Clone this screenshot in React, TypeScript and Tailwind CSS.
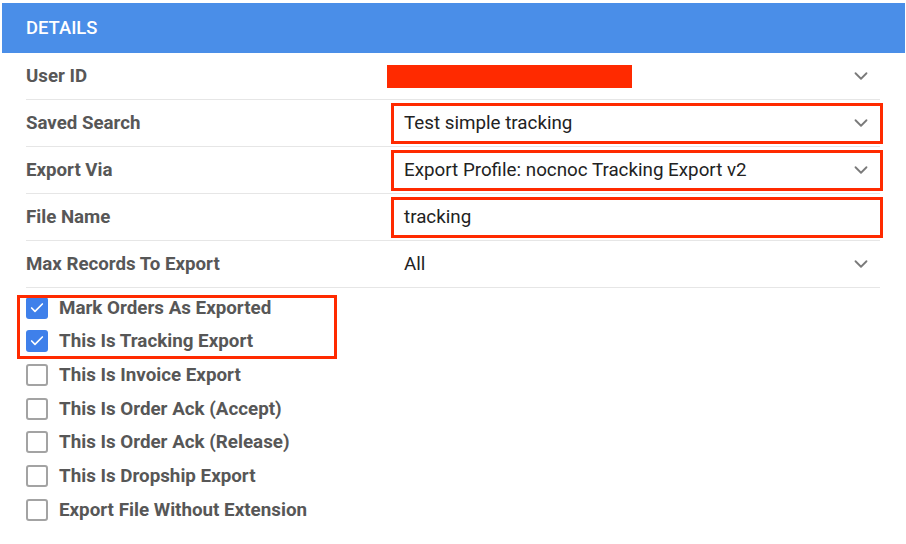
import { ChevronDown, Check } from 'lucide-react';

type Field = {
  label: string;
  value?: string;
  redacted?: boolean;
  boxed?: boolean;
  chevron?: boolean;
};

const fields: Field[] = [
  { label: 'User ID', redacted: true, chevron: true },
  { label: 'Saved Search', value: 'Test simple tracking', boxed: true, chevron: true },
  { label: 'Export Via', value: 'Export Profile: nocnoc Tracking Export v2', boxed: true, chevron: true },
  { label: 'File Name', value: 'tracking', boxed: true },
  { label: 'Max Records To Export', value: 'All', chevron: true },
];

const options = [
  { label: 'Mark Orders As Exported', checked: true },
  { label: 'This Is Tracking Export', checked: true },
  { label: 'This Is Invoice Export', checked: false },
  { label: 'This Is Order Ack (Accept)', checked: false },
  { label: 'This Is Order Ack (Release)', checked: false },
  { label: 'This Is Dropship Export', checked: false },
  { label: 'Export File Without Extension', checked: false },
];

export default function App() {
  return (
    <div
      className="w-[906px] h-[544px] bg-white pt-[3px] pl-[2px] overflow-hidden"
      style={{ fontFamily: 'Roboto, "Liberation Sans", sans-serif' }}
    >
      {/* header */}
      <div className="w-[903px] h-[50px] bg-[#4a8ee8] flex items-center pl-[24px]">
        <span className="text-white text-[18.4px] font-medium">DETAILS</span>
      </div>

      <div className="ml-[24px] w-[854px]">
        {fields.map((f) => (
          <div key={f.label} className="h-[47px] flex items-center border-b border-[#e6e6e6]">
            <div className="w-[365px] text-[18.7px] font-bold text-[#575757]">{f.label}</div>
            <div
              className={`w-[492px] -mr-[3px] h-[41px] flex items-center pl-[10px] pr-[8px] border-[3px] ${
                f.boxed ? 'border-[#ff2a00]' : 'border-transparent'
              }`}
            >
              <div className="flex-1 min-w-0 text-[18.8px] text-[#222]">
                {f.redacted ? (
                  <div className="-ml-[17px] w-[245px] h-[23px] bg-[#ff2a00]" />
                ) : (
                  f.value
                )}
              </div>
              {f.chevron && <ChevronDown size={22} strokeWidth={2} className="text-[#7a7a7a]" />}
            </div>
          </div>
        ))}

        {/* checkbox options */}
        <div className="relative pt-[3px]">
          {options.map((o) => (
            <div key={o.label} className="h-[33.67px] flex items-center gap-[11px]">
              {o.checked ? (
                <div className="w-[22px] h-[22px] rounded-[3px] bg-[#3f80ea] flex items-center justify-center">
                  <Check size={16} strokeWidth={2.5} className="text-white" />
                </div>
              ) : (
                <div className="w-[22px] h-[22px] rounded-[3px] border-2 border-[#a3a3a3]" />
              )}
              <span className="text-[18.8px] font-bold text-[#575757]">{o.label}</span>
            </div>
          ))}
          <div className="absolute left-[-9px] top-[7px] w-[320px] h-[64px] border-[3px] border-[#ff2a00]" />
        </div>
      </div>
    </div>
  );
}
